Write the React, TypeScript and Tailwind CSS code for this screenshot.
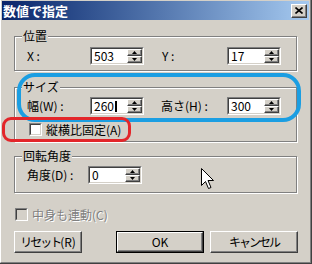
import React from "react";

const raised =
  "border border-white border-r-[#404040] border-b-[#404040] shadow-[inset_-1px_-1px_0_#808080] bg-[#d4d0c8]";
const etched =
  "relative border border-[#808080] shadow-[inset_1px_1px_0_#fff,1px_1px_0_#fff]";

function Arrow({ down }: { down?: boolean }) {
  return (
    <svg width="5" height="3" viewBox="0 0 5 3" className="block">
      {down ? (
        <path d="M0 0h5L2.5 3z" fill="#000" />
      ) : (
        <path d="M0 3h5L2.5 0z" fill="#000" />
      )}
    </svg>
  );
}

function Spin({ value, caret }: { value: string; caret?: boolean }) {
  return (
    <div className="flex h-[18px] w-[54px] shrink-0 border border-[#808080] border-r-white border-b-white">
      <div className="flex flex-1 border border-[#404040] border-r-[#d4d0c8] border-b-[#d4d0c8] bg-white">
        <div className="flex flex-1 items-center pl-[2px] text-[12px] leading-[14px] text-black">
          {value}
          {caret && <span className="ml-[1px] inline-block h-[11px] w-[2px] bg-black" />}
        </div>
        <div className="flex w-[15px] flex-col">
          <div className={`flex h-[7px] items-center justify-center ${raised}`}>
            <Arrow />
          </div>
          <div className={`flex h-[7px] items-center justify-center ${raised}`}>
            <Arrow down />
          </div>
        </div>
      </div>
    </div>
  );
}

function Legend({ children }: { children: React.ReactNode }) {
  return (
    <span className="absolute left-[7px] top-[-8px] bg-[#d4d0c8] px-[1px] text-[12px] leading-[14px] text-black">
      {children}
    </span>
  );
}

function CheckBox({ disabled }: { disabled?: boolean }) {
  return (
    <div
      className={`h-[13px] w-[13px] shrink-0 border border-[#808080] border-r-white border-b-white`}
    >
      <div
        className={`h-full w-full border border-[#404040] border-r-[#d4d0c8] border-b-[#d4d0c8] ${
          disabled ? "bg-[#d4d0c8]" : "bg-white"
        }`}
      />
    </div>
  );
}

function Button({
  children,
  width,
  def,
}: {
  children: React.ReactNode;
  width: string;
  def?: boolean;
}) {
  const face = (
    <div
      className={`flex h-full w-full items-center justify-center border border-white border-r-[#404040] border-b-[#404040] shadow-[inset_-1px_-1px_0_#808080] text-[12px] text-black`}
    >
      {children}
    </div>
  );
  return (
    <div className={`${width} h-[22px] ${def ? "border border-black" : ""}`}>{face}</div>
  );
}

export default function App() {
  return (
    <div
      className="relative h-[264px] w-[312px] overflow-hidden bg-[#d4d0c8] border-r border-b border-[#404040]"
      style={{ fontFamily: '"Noto Sans CJK JP", "Liberation Sans", sans-serif' }}
    >
      <div className="flex h-full flex-col border-l border-r border-b border-white border-r-[#808080] border-b-[#808080] px-[1px] pt-[1px]">
        {/* Title bar */}
        <div className="flex h-[19px] items-center bg-gradient-to-r from-[#0a246a] to-[#a6caf0] pl-[1px] pr-[2px]">
          <span className="text-[13px] font-bold leading-[19px] text-white">数値で指定</span>
          <div
            className={`ml-auto flex h-[14px] w-[16px] items-center justify-center ${raised}`}
          >
            <svg width="8" height="7" viewBox="0 0 8 7">
              <path d="M0.5 0.5l7 6M7.5 0.5l-7 6" stroke="#000" strokeWidth="1.6" />
            </svg>
          </div>
        </div>

        <div className="flex flex-col pl-[12px] pr-[12px]">
          {/* 位置 */}
          <div className={`mt-[16px] w-[283px] ${etched} pb-[5px] pt-[10px]`}>
            <Legend>位置</Legend>
            <div className="flex items-center pl-[12px] text-[12px] text-black">
              <span className="w-[63px]">X :</span>
              <Spin value="503" />
              <span className="ml-[18px] w-[65px]">Y :</span>
              <Spin value="17" />
            </div>
          </div>

          {/* サイズ */}
          <div className={`mt-[16px] w-[283px] ${etched} pb-[5px] pt-[9px]`}>
            <Legend>サイズ</Legend>
            <div className="flex items-center pl-[12px] text-[12px] text-black">
              <span className="w-[63px]">幅(W) :</span>
              <Spin value="260" caret />
              <span className="ml-[17px] w-[66px]">高さ(H) :</span>
              <Spin value="300" />
            </div>
            <div className="mt-[8px] flex items-center pl-[14px] text-[12px] leading-[13px] text-black">
              <CheckBox />
              <span className="ml-[4px]">縦横比固定(A)</span>
            </div>
          </div>

          {/* 回転角度 */}
          <div className={`mt-[14px] w-[283px] ${etched} pb-[8px] pt-[9px]`}>
            <Legend>回転角度</Legend>
            <div className="flex items-center pl-[12px] text-[12px] text-black">
              <span className="w-[61px]">角度(D) :</span>
              <Spin value="0" />
            </div>
          </div>

          {/* 中身も連動 */}
          <div className="ml-[1px] mt-[15px] flex items-center text-[12px] leading-[13px]">
            <CheckBox disabled />
            <span className="ml-[4px] text-[#808080] [text-shadow:1px_1px_0_#fff]">
              中身も連動(C)
            </span>
          </div>

          {/* Buttons */}
          <div className="mt-[10px] flex w-[284px] gap-[6px]">
            <Button width="w-[68px]">
              <span className="tracking-[-2px]">リセット</span>(R)
            </Button>
            <div className="ml-auto" />
            <Button width="w-[88px]" def>
              OK
            </Button>
            <Button width="w-[88px]">
              <span className="tracking-[-2px]">キャンセル</span>
            </Button>
          </div>
        </div>
      </div>

      {/* annotations */}
      <div className="pointer-events-none absolute left-[17px] top-[73px] h-[49px] w-[284px] rounded-[18px] border-[4px] border-[#1b9ee2]" />
      <div className="pointer-events-none absolute left-[2px] top-[117px] h-[25px] w-[129px] rounded-[9px] border-[3px] border-[#e3262a]" />

      {/* mouse cursor */}
      <svg
        className="absolute left-[201px] top-[168px]"
        width="13"
        height="22"
        viewBox="0 0 13 22"
      >
        <path
          d="M0.5 0.5V17.5L4.5 13.5L7.5 20.5L10 19.5L7 12.5H12.5Z"
          fill="#fff"
          stroke="#000"
          strokeWidth="1"
        />
      </svg>
    </div>
  );
}
